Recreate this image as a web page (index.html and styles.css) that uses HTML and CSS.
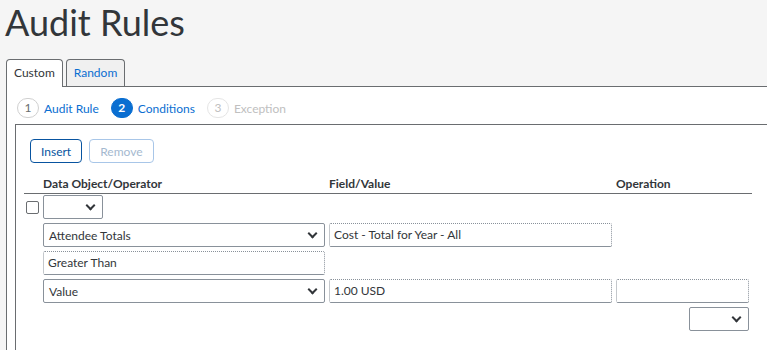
FILE: index.html
```html
<!DOCTYPE html>
<html lang="en">
<head>
    <meta charset="UTF-8">
    <meta name="viewport" content="width=device-width, initial-scale=1.0">
    <title>Audit Rules</title>
    <link rel="stylesheet" href="styles.css">
</head>
<body>

<h1 class="page-title">Audit Rules</h1>

<div class="tabs">
    <div class="tab tab-active">Custom</div>
    <div class="tab">Random</div>
</div>

<div class="tab-panel">
    <div class="steps">
        <div class="step step-done"><span class="step-num">1</span><span class="step-label">Audit Rule</span></div>
        <div class="step step-current"><span class="step-num">2</span><span class="step-label">Conditions</span></div>
        <div class="step step-todo"><span class="step-num">3</span><span class="step-label">Exception</span></div>
    </div>

    <div class="conditions">
        <div class="toolbar">
            <button class="btn">Insert</button>
            <button class="btn btn-disabled">Remove</button>
        </div>

        <div class="grid grid-head">
            <div></div>
            <div>Data Object/Operator</div>
            <div>Field/Value</div>
            <div>Operation</div>
        </div>

        <div class="grid rows">
            <div class="checkbox"></div>
            <div class="select select-small"><span></span></div>
            <div></div>
            <div></div>

            <div></div>
            <div class="select"><span>Attendee Totals</span></div>
            <div class="field">Cost - Total for Year - All</div>
            <div></div>

            <div></div>
            <div class="field">Greater Than</div>
            <div></div>
            <div></div>

            <div></div>
            <div class="select"><span>Value</span></div>
            <div class="field">1.00 USD</div>
            <div class="field"></div>

            <div></div>
            <div></div>
            <div></div>
            <div class="select-end"><div class="select select-small"><span></span></div></div>
        </div>
    </div>
</div>

</body>
</html>
```

FILE: styles.css
```css
body {
    margin: 0;
    height: 100vh;
    overflow: hidden;
    background-color: #f5f5f5;
    font-family: Lato, "Noto Sans", sans-serif;
    font-size: 12px;
    color: #32363a;
}
.page-title {
    margin: 0;
    padding: 2px 0 0 5px;
    height: 57px;
    font-size: 36px;
    font-weight: normal;
    line-height: 40px;
    color: #32363a;
}
.tabs {
    display: flex;
    gap: 3px;
    padding-left: 6px;
    height: 27px;
}
.tab {
    box-sizing: border-box;
    height: 27px;
    padding: 0 7px;
    line-height: 26px;
    border: 1px solid #6a6d70;
    border-bottom: none;
    border-radius: 4px 4px 0 0;
    background-color: #f0f0f0;
    color: #0a6ed1;
}
.tab-active {
    height: 28px;
    margin-bottom: -1px;
    background-color: #fff;
    color: #32363a;
    position: relative;
}
.tab-panel {
    box-sizing: border-box;
    margin-left: 6px;
    border-top: 1px solid #6a6d70;
    border-left: 1px solid #6a6d70;
    background-color: #fff;
    height: calc(100vh - 86px);
    padding: 9px 0 0 8px;
}
.steps {
    display: flex;
    gap: 12px;
    height: 24px;
    align-items: center;
    padding-left: 2px;
}
.step {
    display: flex;
    align-items: center;
    gap: 5px;
}
.step-num {
    box-sizing: border-box;
    width: 22px;
    height: 20px;
    border-radius: 10px;
    border: 1px solid #d0d0d0;
    text-align: center;
    line-height: 18px;
    color: #6a6d70;
}
.step-done .step-label,
.step-current .step-label {
    color: #0a6ed1;
}
.step-current .step-num {
    background-color: #0a6ed1;
    border-color: #0a6ed1;
    color: #fff;
    font-weight: bold;
}
.step-todo .step-num {
    color: #c0c0c0;
    border-color: #e5e5e5;
}
.step-todo .step-label {
    color: #c0c0c0;
}
.conditions {
    box-sizing: border-box;
    margin-top: 4px;
    border-top: 1px solid #6a6d70;
    border-left: 1px solid #6a6d70;
    height: 240px;
    padding: 14px 0 0 8px;
}
.toolbar {
    display: flex;
    gap: 7px;
    padding-left: 6px;
}
.btn {
    box-sizing: border-box;
    height: 24px;
    padding: 0 10px;
    border: 1px solid #0854a0;
    border-radius: 4px;
    background-color: #fff;
    color: #0854a0;
    font-family: inherit;
    font-size: 12px;
}
.btn-disabled {
    border-color: #a8c6e8;
    color: #a5b9cf;
}
.grid {
    display: grid;
    grid-template-columns: 15px 282px 283px 133px;
    column-gap: 4px;
}
.grid-head {
    margin-top: 12px;
    width: 728px;
    border-bottom: 1px solid #6a6d70;
    font-weight: bold;
    line-height: 18px;
    height: 18px;
}
.rows {
    margin-top: 1px;
    row-gap: 4px;
    grid-auto-rows: 24px;
}
.checkbox {
    box-sizing: border-box;
    width: 13px;
    height: 13px;
    margin: 6px 0 0 2px;
    border: 1px solid #6a6d70;
    border-radius: 2px;
    background-color: #fff;
}
.select {
    box-sizing: border-box;
    height: 24px;
    border: 1px solid #89919a;
    border-radius: 2px;
    padding: 0 8px 0 5px;
    display: flex;
    align-items: center;
    justify-content: space-between;
    background-color: #fff;
}
.select::after {
    content: "";
    width: 5px;
    height: 5px;
    border-right: 2px solid #32363a;
    border-bottom: 2px solid #32363a;
    transform: rotate(45deg);
    margin-top: -4px;
}
.select-small {
    width: 60px;
}
.select-end {
    display: flex;
    justify-content: flex-end;
}
.field {
    box-sizing: border-box;
    height: 24px;
    border: 1px dotted #89919a;
    border-bottom-style: solid;
    border-radius: 2px;
    padding: 0 4px;
    line-height: 22px;
    background-color: #fff;
}
```
